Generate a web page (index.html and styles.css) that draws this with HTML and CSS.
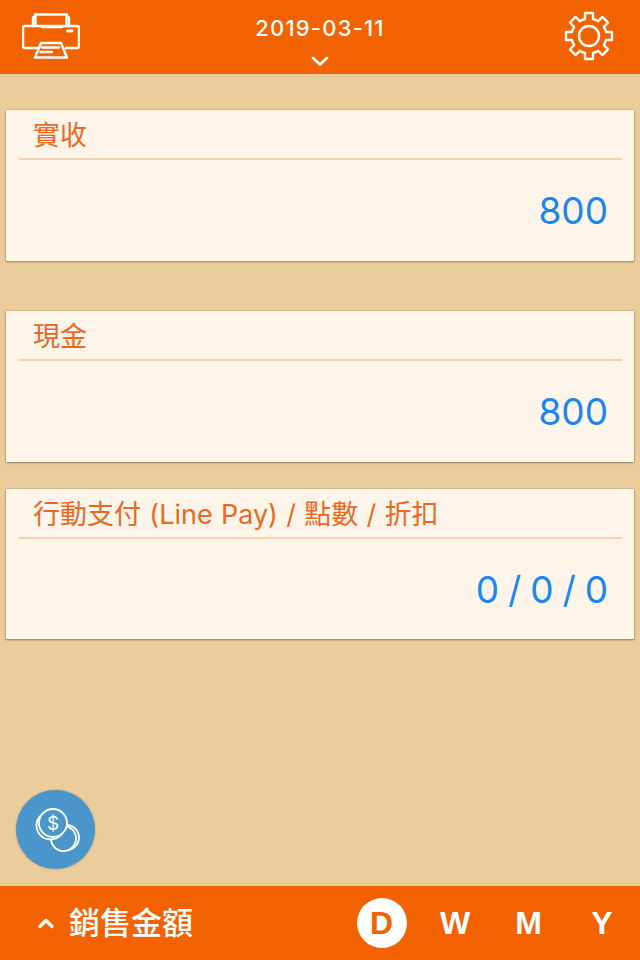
FILE: index.html
```html
<!DOCTYPE html>
<html lang="zh-Hant">
<head>
<meta charset="utf-8">
<title>銷售金額</title>
<link rel="stylesheet" href="styles.css">
</head>
<body>
<div class="app">
  <header class="topbar">
    <svg class="printer" viewBox="0 0 58 46" fill="none" stroke="#fff" stroke-width="2.500" stroke-linejoin="round" stroke-linecap="round">
      <path d="M11 13V5.500Q11 4 12.500 4H13V1.500H45V4H45.500Q47 4 47 5.500V13"/>
      <path d="M13.500 4V13M44.500 4V13M20 14H40"/>
      <path d="M15 35H3Q1 35 1 33V15Q1 13 3 13H55Q57 13 57 15V33Q57 35 55 35H44"/>
      <path d="M19 30H39L45 44.500H13Z"/>
      <path d="M20 34.500H37M18.500 39H30"/>
      <path d="M45.500 18H50" stroke-width="2.800"/>
    </svg>
    <div class="date">
      <span class="date-text">2019-03-11</span>
      <svg class="chev" viewBox="0 0 18 10" fill="none" stroke="#fff" stroke-width="2.800" stroke-linecap="round" stroke-linejoin="round"><path d="M2 2L9 8.500L16 2"/></svg>
    </div>
    <svg class="gear" viewBox="-25 -25 50 50" fill="none" stroke="#fff" stroke-width="2.400" stroke-linejoin="round">
      <path d="M-4 -17L-4 -23L4 -23L4 -17A17.500 17.500 0 0 1 9.190 -14.850L13.440 -19.090L19.090 -13.440L14.850 -9.190A17.500 17.500 0 0 1 17 -4L23 -4L23 4L17 4A17.500 17.500 0 0 1 14.850 9.190L19.090 13.440L13.440 19.090L9.190 14.850A17.500 17.500 0 0 1 4 17L4 23L-4 23L-4 17A17.500 17.500 0 0 1 -9.190 14.850L-13.440 19.090L-19.090 13.440L-14.850 9.190A17.500 17.500 0 0 1 -17 4L-23 4L-23 -4L-17 -4A17.500 17.500 0 0 1 -14.850 -9.190L-19.090 -13.440L-13.440 -19.090L-9.190 -14.850A17.500 17.500 0 0 1 -4 -17Z"/>
      <circle r="10"/>
    </svg>
  </header>

  <main class="content">
    <section class="card card-first">
      <h2 class="card-title">實收</h2>
      <p class="card-value">800</p>
    </section>
    <section class="card card-far">
      <h2 class="card-title">現金</h2>
      <p class="card-value">800</p>
    </section>
    <section class="card card-near">
      <h2 class="card-title">行動支付 (Line Pay) / 點數 / 折扣</h2>
      <p class="card-value">0 / 0 / 0</p>
    </section>
  </main>

  <button class="fab" type="button" aria-label="coins">
    <svg viewBox="0 0 79 79" fill="#4a96cb" stroke="#fff" stroke-width="1.800">
      <circle cx="50.500" cy="47.500" r="12.500"/>
      <circle cx="47.500" cy="48.500" r="12.500"/>
      <circle cx="34.500" cy="35.500" r="14"/>
      <circle cx="37" cy="33" r="14"/>
      <text class="fab-dollar" x="37" y="39.500">$</text>
    </svg>
  </button>

  <footer class="bottombar">
    <div class="section-toggle">
      <svg class="chev-up" viewBox="0 0 18 12" fill="none" stroke="#fff" stroke-width="3.400" stroke-linecap="round" stroke-linejoin="round"><path d="M3 9.500L9 3.500L15 9.500"/></svg>
      <span class="section-label">銷售金額</span>
    </div>
    <nav class="periods">
      <span class="period period-active">D</span>
      <span class="period">W</span>
      <span class="period">M</span>
      <span class="period">Y</span>
    </nav>
  </footer>
</div>
</body>
</html>
```
FILE: styles.css
```css
* { box-sizing: border-box; }
html, body { margin: 0; padding: 0; }
body { font-family: Inter, "Noto Sans CJK TC", sans-serif; }
.app {
  position: relative;
  width: 640px;
  height: 960px;
  display: flex;
  flex-direction: column;
  background: #ebcd9b;
  overflow: hidden;
}
.topbar {
  height: 74px;
  flex: none;
  background: #f26300;
  display: flex;
  align-items: flex-start;
  justify-content: space-between;
  padding: 0 26px 0 22px;
}
.printer { width: 58px; height: 46px; margin-top: 13px; }
.gear { width: 50px; height: 50px; margin-top: 11px; }
.date {
  display: flex;
  flex-direction: column;
  align-items: center;
  color: #fff;
  margin-right: 4px;
}
.date-text {
  font-size: 22px;
  font-weight: 500;
  line-height: 26px;
  margin-top: 15px;
  letter-spacing: 1.2px;
}
.chev { width: 18px; height: 10px; margin-top: 15px; }
.content {
  flex: 1;
  padding: 36px 6px 0;
}
.card {
  height: 150px;
  background: #fdf5ea;
  box-shadow: 0 0 1px rgba(110, 85, 45, 0.8), 0 1px 2px rgba(90, 70, 40, 0.5);
  padding: 0 12px 0 13px;
}
.card-first { height: 151px; }
.card-far { margin-top: 50px; height: 151px; }
.card-near { margin-top: 27px; }
.card-title {
  margin: 0;
  height: 50px;
  padding: 7px 0 0 14px;
  border-bottom: 2px solid #fbcfae;
  font-size: 27px;
  line-height: 38px;
  font-weight: 400;
  word-spacing: 0.7px;
  color: #e8691f;
}
.card-value {
  margin: 26px 0 0;
  padding-right: 14px;
  text-align: right;
  font-size: 37px;
  line-height: 50px;
  word-spacing: -1.5px;
  color: #1a86ee;
}
.fab {
  position: absolute;
  left: 16px;
  top: 790px;
  width: 79px;
  height: 79px;
  border: 0;
  padding: 0;
  border-radius: 50%;
  background: #4a96cb;
  box-shadow: 0 0 2px rgba(60, 80, 110, 0.5);
}
.fab svg { display: block; width: 79px; height: 79px; }
.fab-dollar {
  font-family: Inter, sans-serif;
  font-size: 19px;
  fill: #fff;
  stroke: none;
  text-anchor: middle;
}
.bottombar {
  height: 74px;
  flex: none;
  background: #f26300;
  display: flex;
  align-items: center;
  justify-content: space-between;
  padding: 0 13px 0 37px;
  color: #fff;
}
.section-toggle { display: flex; align-items: center; }
.chev-up { width: 18px; height: 12px; }
.section-label {
  margin-left: 14px;
  font-size: 31px;
  font-weight: 500;
  line-height: 40px;
}
.periods { display: flex; align-items: center; gap: 23.5px; }
.period {
  width: 50px;
  height: 50px;
  display: flex;
  align-items: center;
  justify-content: center;
  font-family: "Liberation Sans", sans-serif;
  font-size: 32px;
  font-weight: 700;
}
.period-active {
  background: #fff;
  color: #f26300;
  border-radius: 50%;
}
```
